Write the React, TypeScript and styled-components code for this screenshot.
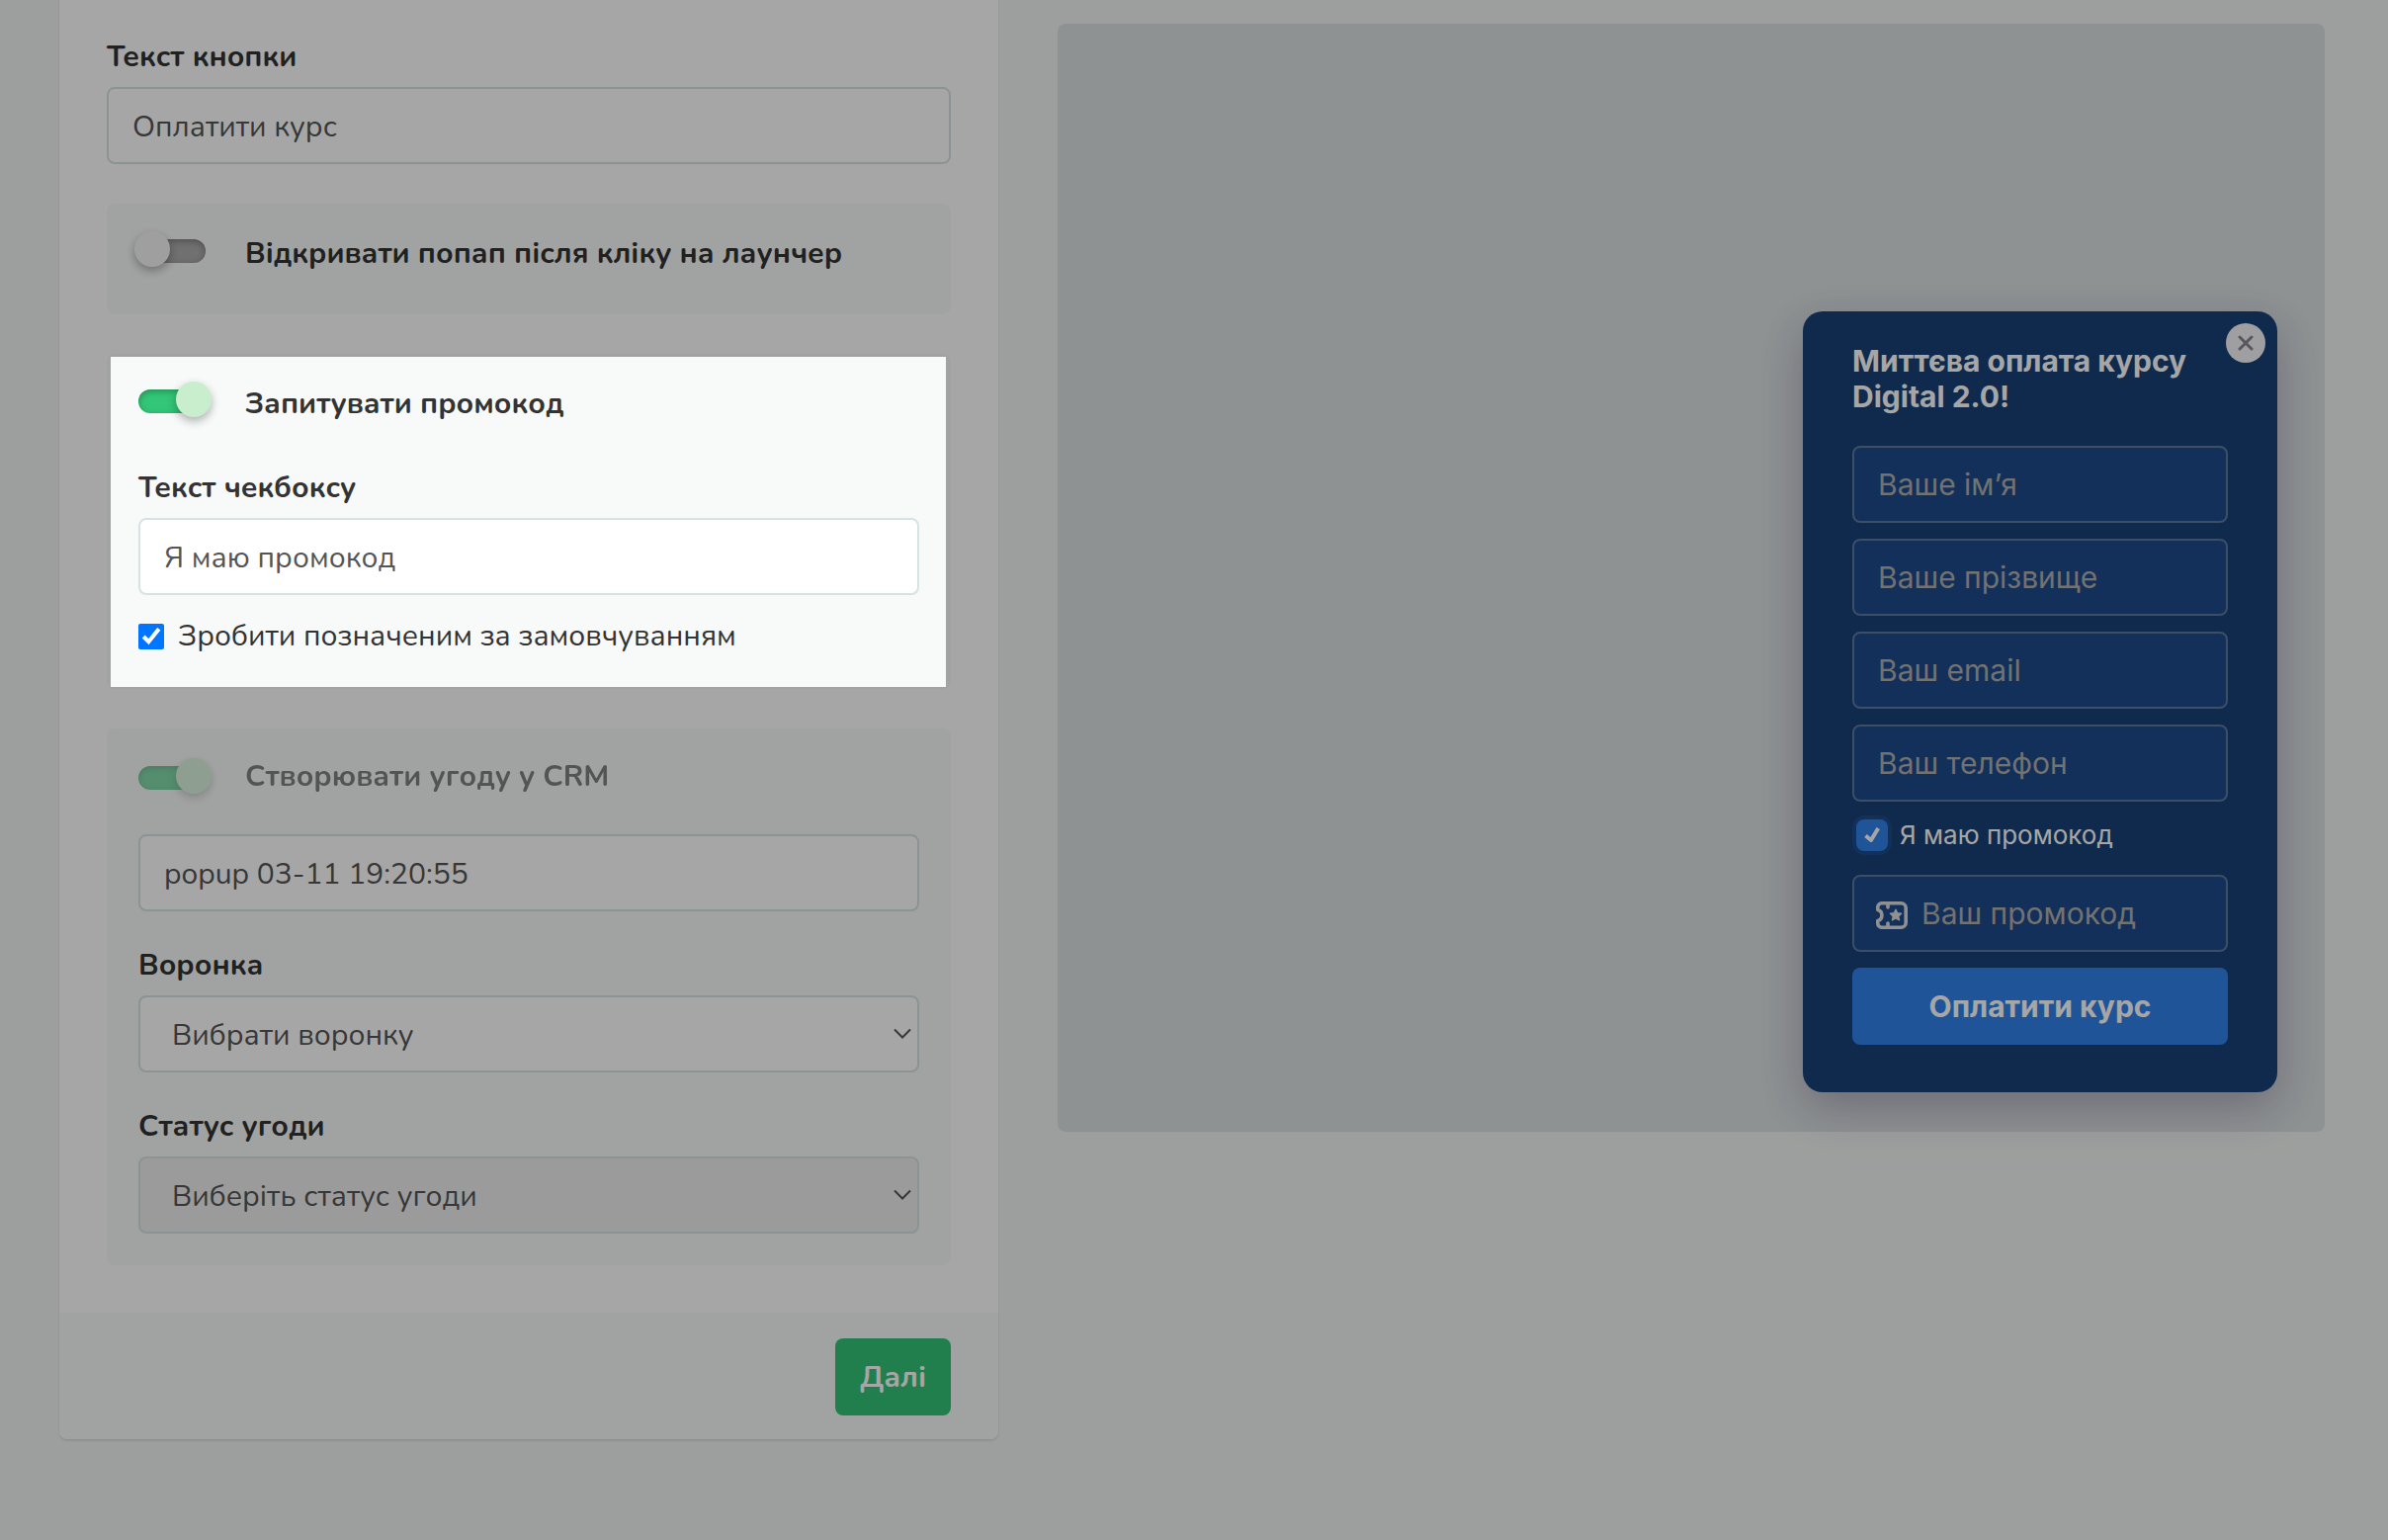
import React, { useState } from "react";
import styled, { createGlobalStyle, css } from "styled-components";

const GlobalStyle = createGlobalStyle`
  *, *::before, *::after { box-sizing: border-box; }
  body {
    margin: 0;
    background: #f2f5f3;
    color: #333;
    font-family: Nunito, Lato, "Open Sans", sans-serif;
    font-size: 30px;
    line-height: 40px;
  }
  button, input, select { font: inherit; margin: 0; }
`;

const Page = styled.main`
  display: grid;
  grid-template-columns: minmax(0, 950fr) minmax(0, 1282fr);
  gap: 60px;
  align-items: start;
  min-height: 100vh;
  padding: 0 64px 60px 60px;
  overflow: hidden;
`;

const Card = styled.form`
  background: #fff;
  border-radius: 0 0 8px 8px;
  box-shadow: 0 2px 2px rgba(60, 80, 70, 0.12), 0 0 0 1px rgba(60, 80, 70, 0.03);
`;

const CardBody = styled.div`
  display: flex;
  flex-direction: column;
  gap: 40px;
  padding: 38px 48px 48px;
`;

const CardFooter = styled.footer`
  display: flex;
  justify-content: flex-end;
  padding: 26px 48px 24px;
  background: #f8faf9;
  border-radius: 0 0 8px 8px;
`;

const SubmitButton = styled.button`
  height: 78px;
  padding: 2px 25px 0;
  border: 0;
  border-radius: 8px;
  background: #32c477;
  color: #fff;
  font-weight: 700;
`;

const Field = styled.div`
  display: flex;
  flex-direction: column;
  gap: 10px;
`;

const FieldLabel = styled.label`
  font-weight: 700;
`;

const control = css`
  width: 100%;
  height: 78px;
  border: 2px solid #d5e3e3;
  border-radius: 8px;
  background: #fff;
  color: #555;
`;

const TextInput = styled.input`
  ${control}
  padding: 2px 24px 0;
`;

const SelectWrap = styled.div`
  position: relative;
  svg {
    position: absolute;
    right: 8px;
    top: 33px;
    pointer-events: none;
  }
`;

const Select = styled.select`
  ${control}
  appearance: none;
  padding: 3px 32px 0;
  opacity: 1;
  &:disabled { background: #efefef; }
`;

const Panel = styled.section<{ $pad: string; $gap?: number; $highlight?: boolean }>`
  position: relative;
  display: flex;
  flex-direction: column;
  gap: ${(p) => p.$gap ?? 0}px;
  padding: ${(p) => p.$pad};
  border-radius: 8px;
  background: #f8faf9;
  ${(p) =>
    p.$highlight &&
    css`
      z-index: 10;
      &::after {
        content: "";
        position: absolute;
        inset: 3px 5px 2px 4px;
        box-shadow: 0 0 0 9999px rgba(0, 0, 0, 0.35);
        pointer-events: none;
      }
    `}
`;

const SwitchInput = styled.input`
  appearance: none;
  position: relative;
  flex: none;
  width: 68px;
  height: 24px;
  border-radius: 12px;
  background: #acacac;
  box-shadow: inset 0 2px 6px rgba(0, 0, 0, 0.3);
  &::after {
    content: "";
    position: absolute;
    top: -8px;
    left: -4px;
    width: 36px;
    height: 36px;
    border-radius: 50%;
    background: #f5f5f5;
    box-shadow: 0 4px 10px rgba(0, 0, 0, 0.3);
  }
  &:checked { background: #33c677; }
  &:checked::after { left: 38px; background: #c9eecd; }
`;

const SwitchRow = styled.label<{ $disabled?: boolean }>`
  display: flex;
  align-items: flex-start;
  gap: 40px;
  font-weight: 700;
  opacity: ${(p) => (p.$disabled ? 0.6 : 1)};
  ${SwitchInput} { margin-top: ${(p) => (p.$disabled ? 9 : 5)}px; }
`;

const PromoField = styled(Field)`
  margin-top: 23px;
`;

const DealInput = styled(TextInput)`
  margin-top: 3px;
`;

const CheckRow = styled.label`
  display: flex;
  align-items: center;
  gap: 14px;
`;

const NativeCheck = styled.input`
  width: 26px;
  height: 26px;
  accent-color: #0075ff;
`;

const Preview = styled.section`
  display: flex;
  justify-content: flex-end;
  align-items: flex-end;
  margin-top: 24px;
  padding: 291px 48px 40px;
  border-radius: 8px;
  background: #dbe1e2;
`;

const Popup = styled.form`
  position: relative;
  display: flex;
  flex-direction: column;
  gap: 16px;
  width: 480px;
  padding: 32px 50px 48px;
  border-radius: 20px;
  background: #184177;
  box-shadow: 0 16px 48px rgba(40, 20, 70, 0.28);
  font-family: Inter, sans-serif;
`;

const PopupTitle = styled.h2`
  margin: 0 0 16px;
  color: #fff;
  font-size: 30px;
  line-height: 36px;
  font-weight: 700;
`;

const CloseButton = styled.button`
  position: absolute;
  top: 12px;
  right: 12px;
  display: grid;
  place-items: center;
  width: 40px;
  height: 40px;
  padding: 0;
  border: 0;
  border-radius: 50%;
  background: #f5f5f7;
`;

const PopupField = styled.div`
  display: flex;
  align-items: center;
  gap: 14px;
  height: 78px;
  padding: 0 24px;
  border: 2px solid #5e789f;
  border-radius: 8px;
  background: #1e4a8c;
  svg { flex: none; margin: 4px 0 0 -2px; }
`;

const PopupInput = styled.input`
  flex: 1;
  min-width: 0;
  padding: 0;
  border: 0;
  outline: 0;
  background: none;
  color: #fff;
  &::placeholder { color: #b0afad; opacity: 1; }
`;

const PopupCheckRow = styled.label`
  display: flex;
  align-items: center;
  gap: 8px;
  margin: -2px 0 4px;
  color: #fff;
  font-size: 26px;
`;

const PopupCheck = styled.span`
  display: grid;
  place-items: center;
  width: 40px;
  height: 40px;
  border-radius: 12px;
  background: #1e4a8c;
  > * { grid-area: 1 / 1; }
  svg { pointer-events: none; z-index: 1; }
  input {
    appearance: none;
    width: 32px;
    height: 32px;
    border-radius: 8px;
    background: #3181ec;
  }
`;

const PayButton = styled.button`
  height: 78px;
  border: 0;
  border-radius: 8px;
  background: #3181ec;
  color: #fff;
  font-weight: 700;
`;

const Chevron = () => (
  <svg width="18" height="12" viewBox="0 0 18 12" fill="none" stroke="#555" strokeWidth="2" aria-hidden="true">
    <path d="M1 1.5 9 9.5 17 1.5" />
  </svg>
);

const TicketIcon = () => (
  <svg width="32" height="28" viewBox="0 0 32 28" fill="none" stroke="#dcdddf" strokeWidth="3.6" aria-hidden="true">
    <path d="M6 1.8H25.4A4.8 4.8 0 0 1 30.2 6.6V21.4A4.8 4.8 0 0 1 25.4 26.2H6A4 4 0 0 1 1.8 22V19.4A5.6 5.6 0 0 0 1.8 8.6V6A4 4 0 0 1 6 1.8Z" strokeLinejoin="round" />
    <path d="M12 2V6M12 22V26" strokeLinecap="round" />
    <path d="M20 8.2 21.7 11.8 25.6 12.3 22.8 15 23.5 18.9 20 17 16.5 18.9 17.2 15 14.4 12.3 18.3 11.8Z" fill="#dcdddf" strokeWidth="1.4" strokeLinejoin="round" />
  </svg>
);

const people = [
  ["first-name", "Ваше ім’я", "text"],
  ["last-name", "Ваше прізвище", "text"],
  ["email", "Ваш email", "email"],
  ["phone", "Ваш телефон", "tel"],
];

export default function App() {
  const [buttonText, setButtonText] = useState("Оплатити курс");
  const [promoText, setPromoText] = useState("Я маю промокод");
  const [dealName, setDealName] = useState("popup 03-11 19:20:55");

  return (
    <>
      <GlobalStyle />
      <Page>
        <Card onSubmit={(e) => e.preventDefault()}>
          <CardBody>
            <Field>
              <FieldLabel htmlFor="button-text">Текст кнопки</FieldLabel>
              <TextInput id="button-text" value={buttonText} onChange={(e) => setButtonText(e.target.value)} />
            </Field>

            <Panel $pad="31px 32px 41px">
              <SwitchRow>
                <SwitchInput type="checkbox" role="switch" />
                Відкривати попап після кліку на лаунчер
              </SwitchRow>
            </Panel>

            <Panel $pad="31px 32px 33px" $gap={22} $highlight>
              <SwitchRow>
                <SwitchInput type="checkbox" role="switch" defaultChecked />
                Запитувати промокод
              </SwitchRow>
              <PromoField>
                <FieldLabel htmlFor="promo-text">Текст чекбоксу</FieldLabel>
                <TextInput id="promo-text" value={promoText} onChange={(e) => setPromoText(e.target.value)} />
              </PromoField>
              <CheckRow>
                <NativeCheck type="checkbox" defaultChecked />
                Зробити позначеним за замовчуванням
              </CheckRow>
            </Panel>

            <Panel $pad="29px 32px 32px" $gap={35}>
              <SwitchRow $disabled>
                <SwitchInput type="checkbox" role="switch" defaultChecked disabled />
                Створювати угоду у CRM
              </SwitchRow>
              <DealInput aria-label="Назва угоди" value={dealName} onChange={(e) => setDealName(e.target.value)} />
              <Field>
                <FieldLabel htmlFor="funnel">Воронка</FieldLabel>
                <SelectWrap>
                  <Select id="funnel">
                    <option>Вибрати воронку</option>
                  </Select>
                  <Chevron />
                </SelectWrap>
              </Field>
              <Field>
                <FieldLabel htmlFor="status">Статус угоди</FieldLabel>
                <SelectWrap>
                  <Select id="status" disabled>
                    <option>Виберіть статус угоди</option>
                  </Select>
                  <Chevron />
                </SelectWrap>
              </Field>
            </Panel>
          </CardBody>
          <CardFooter>
            <SubmitButton type="submit">Далі</SubmitButton>
          </CardFooter>
        </Card>

        <Preview>
          <Popup onSubmit={(e) => e.preventDefault()}>
            <CloseButton type="button" aria-label="Закрити">
              <svg width="16" height="16" viewBox="0 0 16 16" stroke="#85888f" strokeWidth="3" strokeLinecap="round" aria-hidden="true">
                <path d="M2 2 14 14M14 2 2 14" />
              </svg>
            </CloseButton>
            <PopupTitle>Миттєва оплата курсу Digital 2.0!</PopupTitle>
            {people.map(([name, text, type]) => (
              <PopupField key={name}>
                <PopupInput type={type} name={name} placeholder={text} aria-label={text} />
              </PopupField>
            ))}
            <PopupCheckRow>
              <PopupCheck>
                <input type="checkbox" defaultChecked />
                <svg width="16" height="18" viewBox="0 0 16 18" fill="none" stroke="#fff" strokeWidth="4" strokeLinejoin="round" aria-hidden="true">
                  <path d="M1.5 9.5 7 14 14.2 2" />
                </svg>
              </PopupCheck>
              {promoText}
            </PopupCheckRow>
            <PopupField>
              <TicketIcon />
              <PopupInput name="promo" placeholder="Ваш промокод" aria-label="Ваш промокод" />
            </PopupField>
            <PayButton type="submit">{buttonText}</PayButton>
          </Popup>
        </Preview>
      </Page>
    </>
  );
}
